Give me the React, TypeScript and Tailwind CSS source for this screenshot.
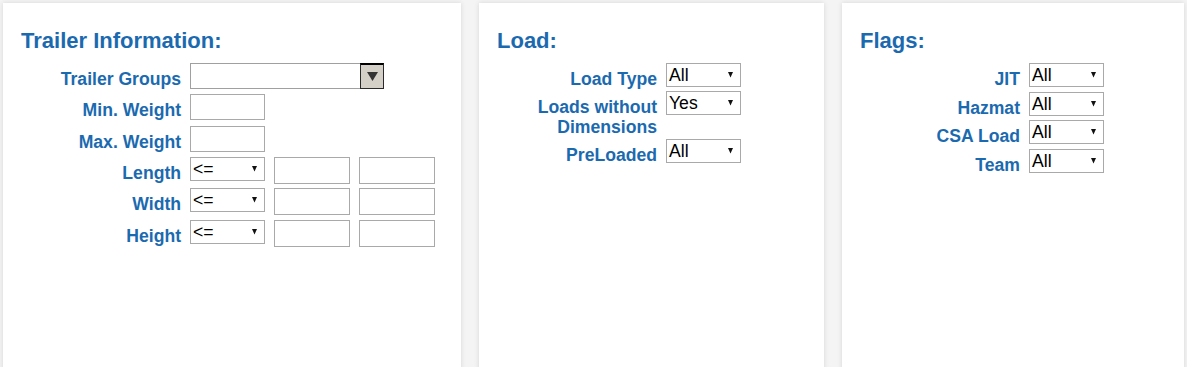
import React from 'react'

const labelCls =
  'w-[160px] shrink-0 pt-[6px] text-right text-[17.6px] leading-[20px] font-bold text-[#1b6ab0]'

function Arrow() {
  return (
    <svg className="absolute right-[7px] top-[8px]" width="5" height="6" viewBox="0 0 5 6">
      <polygon points="0,0 5,0 2.5,5.5" fill="#111" />
    </svg>
  )
}

function Select({ value }: { value: string }) {
  return (
    <div className="relative h-[24px] w-[75px] shrink-0 border border-[#a9a9a9] bg-white pl-[2px] pt-px text-[17.6px] leading-[21px] text-black">
      {value}
      <Arrow />
    </div>
  )
}

function TextBox({ tall }: { tall?: boolean }) {
  return (
    <input
      type="text"
      className={`${tall ? 'h-[27px] w-[76px]' : 'h-[26px] w-[75px]'} shrink-0 border border-[#a9a9a9] bg-white outline-none`}
    />
  )
}

function GroupPicker() {
  return (
    <div className="flex h-[26px] w-[194px] shrink-0 border border-[#a0a0a0] bg-white">
      <div className="flex-1" />
      <div className="-my-px -mr-px flex w-[24px] items-center justify-center border border-t-2 border-[#2a2a2a] border-t-black bg-[#d4d0c8]">
        <svg width="11" height="9" viewBox="0 0 11 9">
          <polygon points="0,0 11,0 5.5,9" fill="#333" />
        </svg>
      </div>
    </div>
  )
}

function Row({ label, h, children }: { label: string; h: string; children: React.ReactNode }) {
  return (
    <div className={`flex items-start gap-[9px] ${h}`}>
      <div className={labelCls}>{label}</div>
      {children}
    </div>
  )
}

function Heading({ children }: { children: React.ReactNode }) {
  return <h2 className="mb-[9px] text-[22px] leading-[26px] font-bold text-[#1b6ab0]">{children}</h2>
}

function Dim({ label }: { label: string }) {
  return (
    <Row label={label} h="h-[31.4px]">
      <Select value="<=" />
      <TextBox tall />
      <TextBox tall />
    </Row>
  )
}

export default function App() {
  return (
    <div
      className="flex h-[367px] w-[1187px] gap-[18px] overflow-hidden bg-[#f4f4f4] pl-[3px] pt-[3px]"
      style={{ fontFamily: '"Liberation Sans", Arial, sans-serif' }}
    >
      <section className="h-[400px] w-[458px] shrink-0 bg-white px-[18px] pt-[25px] shadow-[0_0_5px_rgba(0,0,0,0.12)]">
        <Heading>Trailer Information:</Heading>
        <Row label="Trailer Groups" h="h-[31px]">
          <GroupPicker />
        </Row>
        <Row label="Min. Weight" h="h-[31.7px]">
          <TextBox />
        </Row>
        <Row label="Max. Weight" h="h-[31.3px]">
          <TextBox />
        </Row>
        <Dim label="Length" />
        <Dim label="Width" />
        <Dim label="Height" />
      </section>

      <section className="h-[400px] w-[345px] shrink-0 bg-white px-[18px] pt-[25px] shadow-[0_0_5px_rgba(0,0,0,0.12)]">
        <Heading>Load:</Heading>
        <Row label="Load Type" h="h-[28px]">
          <Select value="All" />
        </Row>
        <Row label="Loads without Dimensions" h="h-[48px]">
          <Select value="Yes" />
        </Row>
        <Row label="PreLoaded" h="h-[28px]">
          <Select value="All" />
        </Row>
      </section>

      <section className="h-[400px] w-[342px] shrink-0 bg-white px-[18px] pt-[25px] shadow-[0_0_5px_rgba(0,0,0,0.12)]">
        <Heading>Flags:</Heading>
        <Row label="JIT" h="h-[28.5px]">
          <Select value="All" />
        </Row>
        <Row label="Hazmat" h="h-[28.5px]">
          <Select value="All" />
        </Row>
        <Row label="CSA Load" h="h-[28.5px]">
          <Select value="All" />
        </Row>
        <Row label="Team" h="h-[28.5px]">
          <Select value="All" />
        </Row>
      </section>
    </div>
  )
}
